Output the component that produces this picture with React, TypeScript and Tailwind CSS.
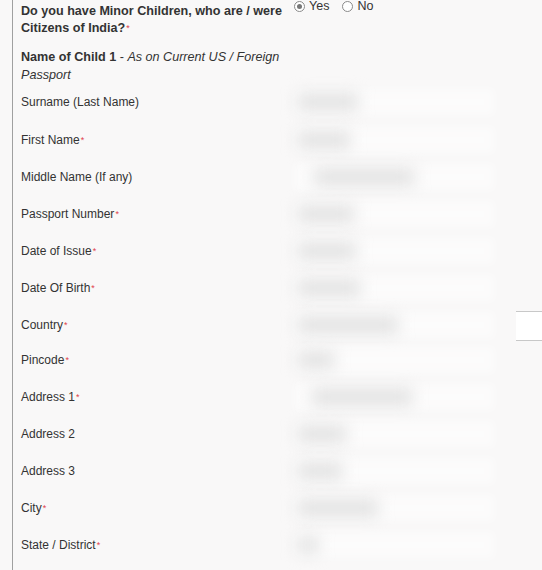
import React from "react";

type Row = { label: string; req: boolean; h: string; blob: string; blobOff: string };

const rows: Row[] = [
  { label: "Surname (Last Name)", req: false, h: "", blob: "w-[60px]", blobOff: "ml-[4px]" },
  { label: "First Name", req: true, h: "mt-[1px]", blob: "w-[52px]", blobOff: "ml-[4px]" },
  { label: "Middle Name (If any)", req: false, h: "", blob: "w-[100px]", blobOff: "ml-[20px]" },
  { label: "Passport Number", req: true, h: "", blob: "w-[56px]", blobOff: "ml-[4px]" },
  { label: "Date of Issue", req: true, h: "", blob: "w-[58px]", blobOff: "ml-[4px]" },
  { label: "Date Of Birth", req: true, h: "", blob: "w-[62px]", blobOff: "ml-[4px]" },
  { label: "Country", req: true, h: "", blob: "w-[100px]", blobOff: "ml-[4px]" },
  { label: "Pincode", req: true, h: "-mt-[2px]", blob: "w-[36px]", blobOff: "ml-[4px]" },
  { label: "Address 1", req: true, h: "", blob: "w-[100px]", blobOff: "ml-[18px]" },
  { label: "Address 2", req: false, h: "", blob: "w-[48px]", blobOff: "ml-[4px]" },
  { label: "Address 3", req: false, h: "", blob: "w-[44px]", blobOff: "ml-[4px]" },
  { label: "City", req: true, h: "", blob: "w-[80px]", blobOff: "ml-[4px]" },
  { label: "State / District", req: true, h: "", blob: "w-[20px]", blobOff: "ml-[4px]" },
];

function Req() {
  return <span className="text-[#e0404a] text-[9px] font-normal not-italic relative top-[-1px] ml-[1px]">*</span>;
}

function Radio({ checked }: { checked: boolean }) {
  return (
    <span className="inline-flex items-center justify-center w-[11px] h-[11px] rounded-full border border-[#8a8a8a] bg-white">
      {checked && <span className="w-[5px] h-[5px] rounded-full bg-[#777]" />}
    </span>
  );
}

export default function App() {
  return (
    <div
      className="relative w-[542px] h-[570px] overflow-hidden bg-[#f9f8f8] text-[#333] text-[12px]"
      style={{ fontFamily: '"Liberation Sans", Arial, sans-serif' }}
    >
      <div className="ml-[12px] border-l border-[#a0a0a0] pl-[8px] h-full">
        <div className="flex pt-[3px]">
          <div className="w-[273px] font-bold text-[12.6px] leading-[17px]">
            Do you have Minor Children, who are / were Citizens of India?<Req />
          </div>
          <div className="flex items-center gap-[4px] -mt-[3px] h-[12px] leading-[12px] text-[12.5px]">
            <Radio checked />
            <span className="mr-[9px]">Yes</span>
            <Radio checked={false} />
            <span>No</span>
          </div>
        </div>
        <div className="w-[273px] leading-[18px] mt-[10px] text-[12.6px]">
          <span className="font-bold">Name of Child 1</span> - <span className="italic">As on Current US / Foreign Passport</span>
        </div>
        <div className="mt-[-1px]">
          {rows.map((r) => (
            <div key={r.label} className={`flex items-center h-[37px] ${r.h}`}>
              <div className="w-[273px]">
                {r.label}
                {r.req && <Req />}
              </div>
              <div className="relative w-[200px] h-[26px]">
                <div className="absolute inset-0 bg-white/50 blur-[4px]" />
                <div className={`absolute top-[5px] h-[16px] ${r.blob} ${r.blobOff} bg-[#e0e0e0] blur-[8px]`} />
              </div>
            </div>
          ))}
        </div>
      </div>
      <div className="absolute left-[516px] top-[311px] w-[40px] h-[30px] bg-white border-t border-b border-[#c8c8c8]" />
    </div>
  );
}
